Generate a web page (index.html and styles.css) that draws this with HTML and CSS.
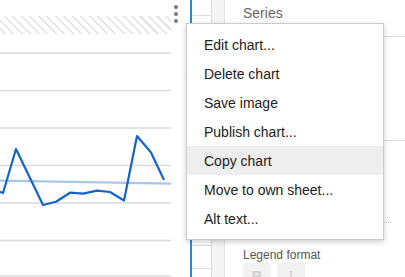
FILE: index.html
```html
<!DOCTYPE html>
<html lang="en">
<head>
    <meta charset="UTF-8">
    <meta name="viewport" content="width=device-width, initial-scale=1.0">
    <title>Chart menu</title>
    <link rel="stylesheet" href="styles.css">
</head>
<body>
    <div id="app">
        <div class="chart">
            <div class="band"></div>
            <svg class="plot" width="171" height="243" viewBox="0 0 171 243">
                <g stroke="#dadada" stroke-width="1.5">
                    <line x1="0" y1="19" x2="171" y2="19"/>
                    <line x1="0" y1="56.5" x2="171" y2="56.5"/>
                    <line x1="0" y1="94" x2="171" y2="94"/>
                    <line x1="0" y1="131.5" x2="171" y2="131.5"/>
                    <line x1="0" y1="169" x2="171" y2="169"/>
                    <line x1="0" y1="206.5" x2="171" y2="206.5"/>
                    <line x1="0" y1="242" x2="171" y2="242"/>
                </g>
                <line x1="0" y1="146.7" x2="171" y2="149.7" stroke="#a9c5ee" stroke-width="2.2"/>
                <polyline fill="none" stroke="#1565c8" stroke-width="2.2" stroke-linejoin="round"
                    points="0,157.7 3,159 16,115 43,171 56,167.7 70,158.7 83,159.7 97,156.7 110,158 124,166.5 137,102 151,118.5 164,146"/>
            </svg>
        </div>
        <div class="kebab">
            <span class="dot"></span>
            <span class="dot"></span>
            <span class="dot"></span>
        </div>
        <div class="sheet-col">
            <div class="cells"></div>
            <div class="gutter"></div>
        </div>
        <div class="panel">
            <div class="panel-title">Series</div>
            <div class="divider"></div>
            <div class="spacer-a"></div>
            <div class="divider"></div>
            <div class="spacer-b"></div>
            <div class="dotted"></div>
            <div class="legend-label">Legend format</div>
            <div class="fmt-buttons">
                <span class="fmt-btn bold">B</span>
                <span class="fmt-btn italic">I</span>
            </div>
        </div>

        <ul class="menu">
            <li class="menu-item">Edit chart...</li>
            <li class="menu-item">Delete chart</li>
            <li class="menu-item">Save image</li>
            <li class="menu-item">Publish chart...</li>
            <li class="menu-item active">Copy chart</li>
            <li class="menu-item">Move to own sheet...</li>
            <li class="menu-item">Alt text...</li>
        </ul>
    </div>
</body>
</html>
```

FILE: styles.css
```css
body{
    margin: 0;
    padding: 0;
    background-color: #ffffff;
    font-family: "Liberation Sans", Arial, Helvetica, sans-serif;
}

#app{
    position: relative;
    display: flex;
    width: 405px;
    height: 277px;
    overflow: hidden;
}

.chart{
    width: 171px;
    flex-shrink: 0;
}

.band{
    height: 18px;
    margin-top: 16px;
    background: repeating-linear-gradient(45deg, #ffffff 0 3px, #e2e2e2 3px 4.5px, #ffffff 4.5px 6px);
}

.plot{
    display: block;
}

.kebab{
    width: 19px;
    flex-shrink: 0;
    display: flex;
    flex-direction: column;
    gap: 3px;
    padding-top: 5px;
    padding-left: 3px;
    box-sizing: border-box;
}

.dot{
    width: 4px;
    height: 4px;
    border-radius: 50%;
    background-color: #7a7a7a;
}

.sheet-col{
    display: flex;
    width: 35px;
    flex-shrink: 0;
    border-left: 2px solid #1a8cf0;
    box-sizing: border-box;
}

.cells{
    width: 19px;
    border-right: 1px solid #dcdcdc;
    background: repeating-linear-gradient(to bottom, #ffffff 0 15px, #dcdcdc 15px 16px, #ffffff 16px 23px);
}

.gutter{
    flex: 1;
    background-color: #f5f5f5;
    border-right: 1px solid #e2e2e2;
}

.panel{
    flex: 1;
    padding-left: 18px;
    box-sizing: border-box;
}

.panel-title{
    font-size: 14px;
    color: #666666;
    line-height: 16px;
    padding-top: 5px;
}

.divider{
    height: 1px;
    background-color: #e2e2e2;
    margin-top: 15px;
}

.spacer-a{
    height: 88px;
}

.spacer-b{
    height: 81px;
}

.dotted{
    height: 0;
    border-top: 1px dotted #bdbdbd;
    margin-right: 14px;
}

.legend-label{
    font-size: 12px;
    color: #555555;
    line-height: 14px;
    margin-top: 25px;
}

.fmt-buttons{
    display: flex;
    gap: 6px;
    margin-top: 1px;
}

.fmt-btn{
    width: 28px;
    height: 24px;
    border-radius: 2px;
    background-color: #f2f2f2;
    color: #d0d0d0;
    font-size: 15px;
    text-align: center;
    line-height: 26px;
}

.bold{
    font-weight: bold;
}

.italic{
    font-family: "Liberation Serif", serif;
}

.menu{
    position: absolute;
    left: 186px;
    top: 23px;
    width: 198px;
    margin: 0;
    padding: 6px 0;
    list-style: none;
    background-color: #ffffff;
    border: 1px solid #cccccc;
    box-sizing: border-box;
    box-shadow: 0 2px 6px rgba(0, 0, 0, 0.2);
}

.menu-item{
    height: 29px;
    line-height: 30px;
    padding-left: 17px;
    font-size: 14px;
    color: #222222;
}

.menu-item.active{
    background-color: #eeeeee;
}
```
